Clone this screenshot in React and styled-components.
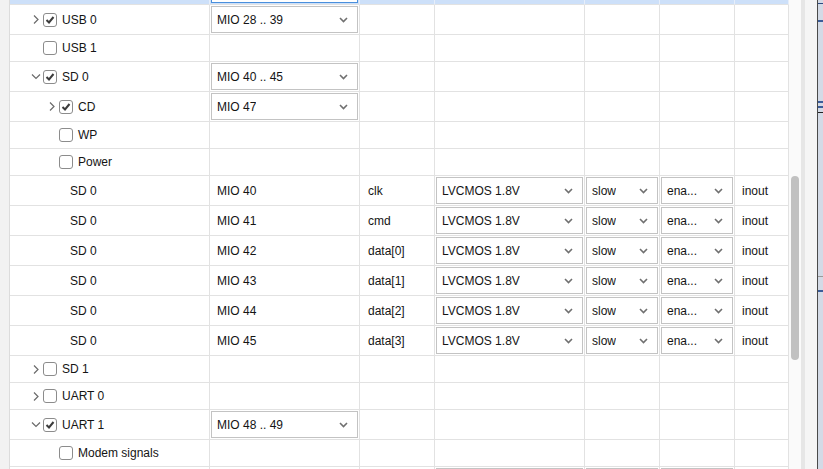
import React from 'react';
import styled, { createGlobalStyle } from 'styled-components';

const Global = createGlobalStyle`
  html, body { margin: 0; padding: 0; background: #fff; overflow: hidden; }
  body {
    font-family: "Liberation Sans", Arial, sans-serif;
    font-size: 12px;
    color: #141414;
  }
  * { box-sizing: border-box; }
`;

const COLS = '200px 150px 75px 150px 75px 75px 54px';
const GRID = '#e2e2e2';

const Screen = styled.div`
  display: flex;
  width: 823px;
  height: 469px;
  overflow: hidden;
  background: #fff;
`;

const LeftGutter = styled.div`
  flex: none;
  width: 10px;
  background: #f2f2f2;
  border-right: 1px solid #dcdcdc;
`;

const Viewport = styled.div`
  flex: none;
  width: 779px;
  overflow: hidden;
`;

const Table = styled.div`
  display: flex;
  flex-direction: column;
  margin-top: ${p => p.$offset}px;
`;

const Row = styled.div`
  display: grid;
  grid-template-columns: ${COLS};
  height: ${p => p.$h}px;
  flex: none;
  background: ${p => (p.$selected ? '#cde0f9' : '#fff')};
`;

const Cell = styled.div`
  display: flex;
  align-items: center;
  min-width: 0;
  overflow: hidden;
  white-space: nowrap;
  padding-left: ${p => p.$pad || 0}px;
  border-right: 1px solid ${p => (p.$selected ? '#e6eefa' : GRID)};
  border-bottom: 1px solid ${GRID};
`;

const ChevronSlot = styled.span`
  flex: none;
  width: 12px;
  height: 13px;
  display: flex;
  align-items: center;
  justify-content: center;
`;

const Box = styled.span`
  flex: none;
  width: 14px;
  height: 14px;
  margin-left: 1px;
  border: 1px solid #8c8c8c;
  border-radius: 3px;
  background: #fff;
  display: flex;
  align-items: center;
  justify-content: center;
`;

const Label = styled.span`
  margin-left: 5px;
`;

const Select = styled.div`
  flex: 1;
  min-width: 0;
  height: 27px;
  margin: 0 1px;
  border: 1px solid ${p => (p.$focus ? '#4a8fdc' : '#c3c3c3')};
  background: #fff;
  display: flex;
  align-items: center;
  justify-content: space-between;
  padding: 0 9px 0 5px;
  white-space: nowrap;
`;

const SelectText = styled.span`
  overflow: hidden;
`;

const Track = styled.div`
  flex: none;
  width: 12px;
  background: #fafafa;
  padding-top: 176px;
`;

const Thumb = styled.div`
  width: 8px;
  height: 184px;
  margin-left: 2px;
  border-radius: 4px;
  background: #c1c1c1;
`;

const Splitter = styled.div`
  flex: none;
  width: 4px;
  background: #e6e6e6;
`;

const SidePanel = styled.div`
  flex: none;
  width: 12px;
  background: #f5f5f5;
`;

const OtherWindow = styled.div`
  flex: none;
  width: 6px;
  border-left: 1px solid #4a4a4a;
  background: #d3dae6;
  display: flex;
  flex-direction: column;
`;

const Stripe = styled.div`
  flex: none;
  height: ${p => p.$h}px;
  margin-top: ${p => p.$gap}px;
  background: ${p => p.$c};
`;

const Chevron = () => (
  <svg width="9" height="6" viewBox="0 0 9 6">
    <path d="M1 1 L4.5 4.5 L8 1" fill="none" stroke="#707070" strokeWidth="1.6" />
  </svg>
);

const TreeArrow = ({ open }) => (
  <svg width="12" height="13" viewBox="0 0 12 13">
    {open ? (
      <path d="M2 4.5 L6 8.5 L10 4.5" fill="none" stroke="#6a6a6a" strokeWidth="1.2" />
    ) : (
      <path d="M4 2.5 L8 6.5 L4 10.5" fill="none" stroke="#6a6a6a" strokeWidth="1.2" />
    )}
  </svg>
);

const Check = () => (
  <svg width="12" height="12" viewBox="0 0 12 12">
    <path d="M2.5 6 L5 8.5 L9.5 3" fill="none" stroke="#3c3c3c" strokeWidth="2" />
  </svg>
);

const Dropdown = ({ value, focus }) => (
  <Select $focus={focus}>
    <SelectText>{value}</SelectText>
    {!focus && <Chevron />}
  </Select>
);

const EmptyCells = ({ n, selected }) =>
  Array.from({ length: n }).map((_, i) => <Cell key={i} $selected={selected} />);

const TreeRow = ({ level, arrow, checked, label, mio }) => (
  <Row $h={mio ? 30 : 27}>
    <Cell $pad={20 + (level - 1) * 16}>
      <ChevronSlot>{arrow && <TreeArrow open={arrow === 'open'} />}</ChevronSlot>
      <Box>{checked && <Check />}</Box>
      <Label>{label}</Label>
    </Cell>
    <Cell>{mio && <Dropdown value={mio} />}</Cell>
    <EmptyCells n={5} />
  </Row>
);

const PinRow = ({ periph, pin, signal, dir, values }) => (
  <Row $h={30}>
    <Cell $pad={60}>{periph}</Cell>
    <Cell $pad={7}>{pin}</Cell>
    <Cell $pad={8}>{signal}</Cell>
    <Cell><Dropdown value={values[0]} /></Cell>
    <Cell><Dropdown value={values[1]} /></Cell>
    <Cell><Dropdown value={values[2]} /></Cell>
    <Cell $pad={7}>{dir}</Cell>
  </Row>
);

const sdPins = [
  ['MIO 40', 'clk'],
  ['MIO 41', 'cmd'],
  ['MIO 42', 'data[0]'],
  ['MIO 43', 'data[1]'],
  ['MIO 44', 'data[2]'],
  ['MIO 45', 'data[3]'],
];

const pinValues = ['LVCMOS 1.8V', 'slow', 'ena...'];

const stripes = [
  { gap: 3, h: 1, c: '#2c4a80' },
  { gap: 16, h: 2, c: '#3b5c99' },
  { gap: 79, h: 2, c: '#3b5c99' },
  { gap: 3, h: 2, c: '#3b5c99' },
  { gap: 4, h: 1, c: '#222' },
  { gap: 163, h: 1, c: '#9a9a9a' },
  { gap: 13, h: 2, c: '#3b5c99' },
];

export default function App() {
  return (
    <>
      <Global />
      <Screen>
        <LeftGutter />
        <Viewport>
          <Table $offset={-25}>
            <Row $h={30} $selected>
              <Cell $selected />
              <Cell $selected><Dropdown value="" focus /></Cell>
              <EmptyCells n={5} selected />
            </Row>
            <TreeRow level={1} arrow="closed" checked label="USB 0" mio="MIO 28 .. 39" />
            <TreeRow level={1} label="USB 1" />
            <TreeRow level={1} arrow="open" checked label="SD 0" mio="MIO 40 .. 45" />
            <TreeRow level={2} arrow="closed" checked label="CD" mio="MIO 47" />
            <TreeRow level={2} label="WP" />
            <TreeRow level={2} label="Power" />
            {sdPins.map(([pin, sig]) => (
              <PinRow key={pin} periph="SD 0" pin={pin} signal={sig} dir="inout" values={pinValues} />
            ))}
            <TreeRow level={1} arrow="closed" label="SD 1" />
            <TreeRow level={1} arrow="closed" label="UART 0" />
            <TreeRow level={1} arrow="open" checked label="UART 1" mio="MIO 48 .. 49" />
            <TreeRow level={2} label="Modem signals" />
            <PinRow periph="" pin="" signal="" dir="" values={['', '', '']} />
          </Table>
        </Viewport>
        <Track><Thumb /></Track>
        <Splitter />
        <SidePanel />
        <OtherWindow>
          {stripes.map((s, i) => (
            <Stripe key={i} $gap={s.gap} $h={s.h} $c={s.c} />
          ))}
        </OtherWindow>
      </Screen>
    </>
  );
}
